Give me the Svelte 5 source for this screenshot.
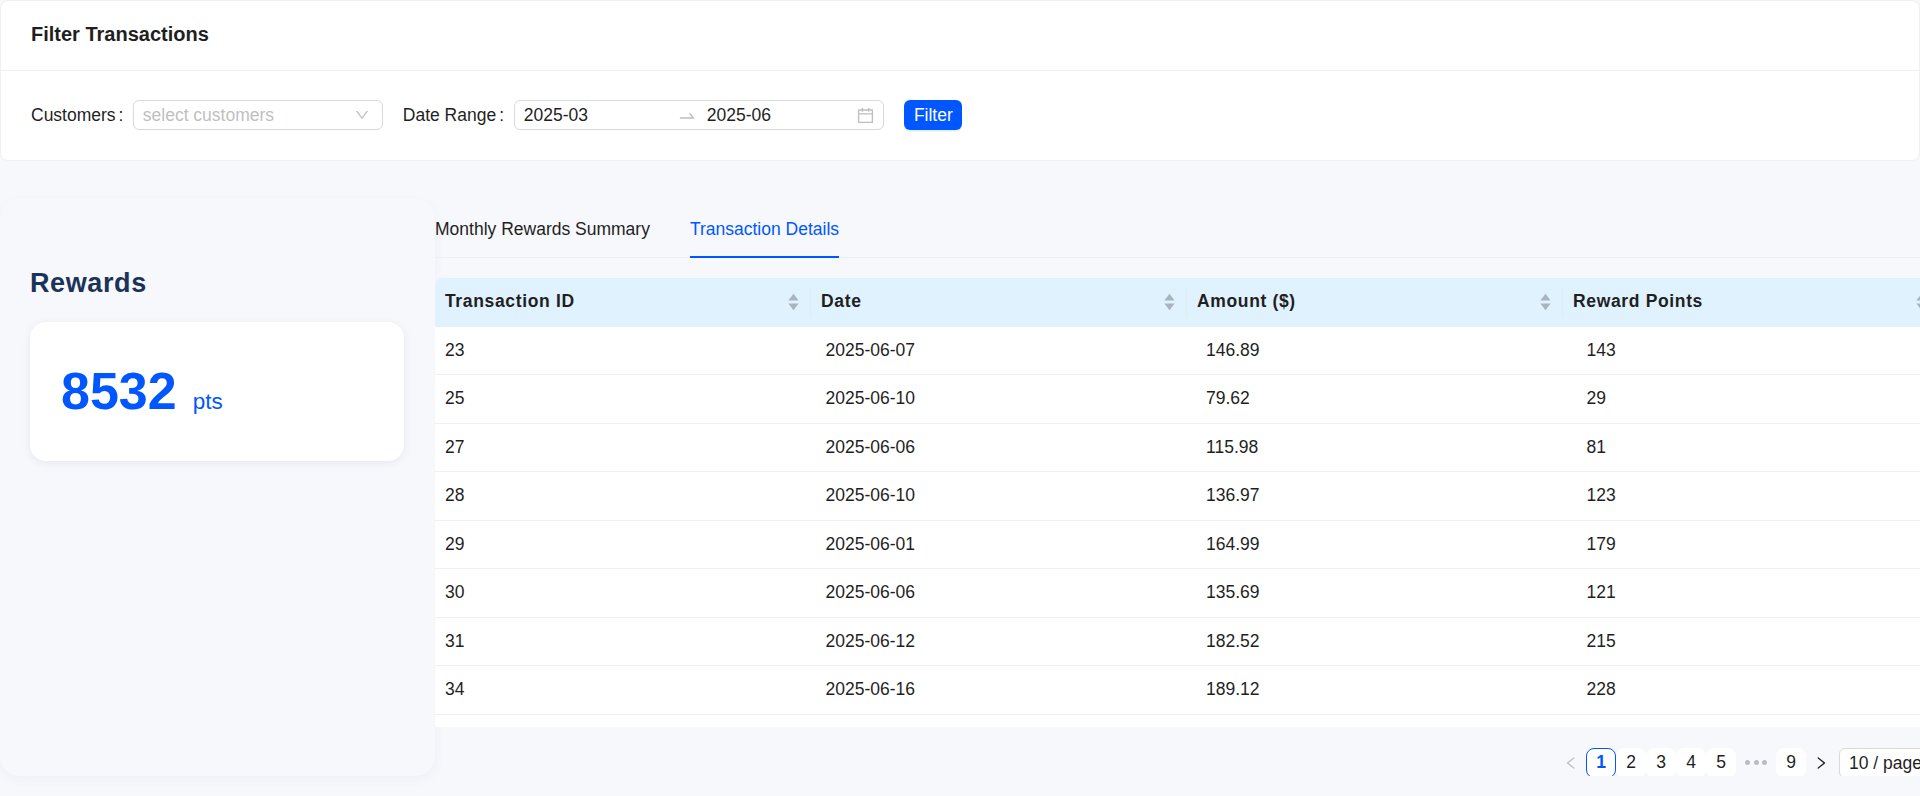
<script>
  const rows = [
    [23, "2025-06-07", "146.89", 143],
    [25, "2025-06-10", "79.62", 29],
    [27, "2025-06-06", "115.98", 81],
    [28, "2025-06-10", "136.97", 123],
    [29, "2025-06-01", "164.99", 179],
    [30, "2025-06-06", "135.69", 121],
    [31, "2025-06-12", "182.52", 215],
    [34, "2025-06-16", "189.12", 228],
  ];
  const columns = ["Transaction ID", "Date", "Amount ($)", "Reward Points"];
  const pages = [1, 2, 3, 4, 5];
</script>

<div class="page">
  <section class="filter-card">
    <h2 class="filter-title">Filter Transactions</h2>
    <div class="filter-row">
      <span class="field-label">Customers</span>
      <div class="select">
        <span class="placeholder">select customers</span>
        <svg class="chevron" viewBox="64 64 896 896" fill="currentColor"><path d="M884 256h-75c-5.1 0-9.9 2.5-12.9 6.6L512 654.2 227.9 262.6c-3-4.1-7.8-6.6-12.9-6.6h-75c-6.5 0-10.3 7.4-6.5 12.7l352.6 486.1c12.8 17.6 39 17.6 51.7 0l352.6-486.1c3.9-5.3.1-12.7-6.4-12.7z" /></svg>
      </div>
      <span class="field-label date-label">Date Range</span>
      <div class="range">
        <span class="range-value">2025-03</span>
        <svg class="swap" viewBox="0 0 1024 1024" fill="currentColor"><path d="M873.1 596.2l-164-208A32 32 0 0 0 684 376h-64.8c-6.7 0-10.4 7.7-6.3 13l144.3 183H152c-4.4 0-8 3.6-8 8v60c0 4.4 3.6 8 8 8h695.9c26.8 0 41.7-30.8 25.2-51.8z" /></svg>
        <span class="range-value second">2025-06</span>
        <svg class="calendar" viewBox="64 64 896 896" fill="currentColor"><path d="M880 184H712v-64c0-4.4-3.6-8-8-8h-56c-4.4 0-8 3.6-8 8v64H384v-64c0-4.4-3.6-8-8-8h-56c-4.4 0-8 3.6-8 8v64H144c-17.7 0-32 14.3-32 32v664c0 17.7 14.3 32 32 32h736c17.7 0 32-14.3 32-32V216c0-17.7-14.3-32-32-32zm-40 656H184V460h656v380zM184 392V256h128v48c0 4.4 3.6 8 8 8h56c4.4 0 8-3.6 8-8v-48h256v48c0 4.4 3.6 8 8 8h56c4.4 0 8-3.6 8-8v-48h128v136H184z" /></svg>
      </div>
      <button class="filter-btn">Filter</button>
    </div>
  </section>

  <div class="main">
    <aside class="sidebar">
      <h1 class="rewards-title">Rewards</h1>
      <div class="points-card">
        <span class="points">8532</span>
        <span class="unit">pts</span>
      </div>
    </aside>

    <div class="content">
      <div class="tabs">
        <span class="tab">Monthly Rewards Summary</span>
        <span class="tab active">Transaction Details</span>
      </div>

      <div class="table-head">
        {#each columns as col}
          <div class="th">
            <span class="th-label">{col}</span>
            <svg class="sorter" viewBox="0 0 11 18" fill="currentColor">
              <path d="M5.5 .8 10.6 7.6H.4z" />
              <path d="M5.5 17.2 .4 10.4h10.2z" />
            </svg>
          </div>
        {/each}
      </div>
      <div class="table-body">
        {#each rows as row}
          <div class="tr">
            {#each row as cell}
              <div class="td">{cell}</div>
            {/each}
          </div>
        {/each}
      </div>

      <div class="pagination">
        <span class="arrow disabled">
          <svg viewBox="64 64 896 896" fill="currentColor"><path d="M724 218.3V141c0-6.7-7.7-10.4-12.9-6.3L260.3 486.8a31.86 31.86 0 0 0 0 50.3l450.8 352.1c5.3 4.1 12.9.4 12.9-6.3v-77.3c0-4.9-2.3-9.6-6.1-12.6l-360-281 360-281.1c3.8-3 6.1-7.7 6.1-12.6z" /></svg>
        </span>
        {#each pages as p}
          <span class="page-item" class:current={p === 1}>{p}</span>
        {/each}
        <span class="dots"><i></i><i></i><i></i></span>
        <span class="page-item">9</span>
        <span class="arrow">
          <svg viewBox="64 64 896 896" fill="currentColor"><path d="M765.7 486.8L314.9 134.7A7.97 7.97 0 0 0 302 141v77.3c0 4.9 2.3 9.6 6.1 12.6l360 281.1-360 281.1c-3.9 3-6.1 7.7-6.1 12.6V883c0 6.7 7.7 10.4 12.9 6.3l450.8-352.1a31.96 31.96 0 0 0 0-50.4z" /></svg>
        </span>
        <div class="size-changer">10 / page</div>
      </div>
    </div>
  </div>
</div>

<style>
  :global(body) {
    background: #f7f8fc;
    overflow: hidden;
  }

  .page {
    width: 1920px;
    height: 796px;
    overflow: hidden;
    font-family: "Liberation Sans", Arial, sans-serif;
    font-size: 17.5px;
    color: #1f1f1f;
  }

  .filter-card {
    background: #fff;
    border: 1px solid #f0f0f0;
    border-radius: 8px;
    height: 161px;
    box-sizing: border-box;
  }
  .filter-title {
    margin: 0;
    height: 70px;
    box-sizing: border-box;
    padding: 21px 30px 0;
    font-size: 20px;
    line-height: 24px;
    font-weight: 700;
    border-bottom: 1px solid #f0f0f0;
  }
  .filter-row {
    display: flex;
    align-items: center;
    padding: 29px 30px 0;
  }
  .field-label {
    margin-right: 9.3px;
    white-space: nowrap;
  }
  .field-label::after {
    content: ":";
    margin-left: 3px;
  }
  .date-label {
    margin-left: 20px;
    margin-right: 10.3px;
  }
  .select,
  .range {
    height: 30px;
    box-sizing: border-box;
    border: 1px solid #d9d9d9;
    border-radius: 6px;
    background: #fff;
    display: flex;
    align-items: center;
  }
  .select {
    width: 250px;
    padding: 0 13px 0 9px;
    justify-content: space-between;
  }
  .placeholder {
    color: #bfbfbf;
  }
  .chevron {
    width: 14px;
    height: 14px;
    color: #bfbfbf;
  }
  .range {
    width: 370px;
    padding: 0 9px 0 8.5px;
  }
  .range-value {
    width: 153.5px;
  }
  .range-value.second {
    margin-left: 9.5px;
    flex: 1;
  }
  .swap {
    width: 20px;
    height: 20px;
    margin-top: 1px;
    color: #bfbfbf;
  }
  .calendar {
    width: 17px;
    height: 17px;
    color: #bfbfbf;
  }
  .filter-btn {
    margin-left: 20px;
    width: 58px;
    height: 30px;
    padding: 0;
    border: none;
    border-radius: 6px;
    background: #0057ff;
    color: #fff;
    font: inherit;
    box-shadow: 0 2px 0 rgba(5, 145, 255, 0.1);
  }

  .main {
    display: flex;
    margin-top: 37px;
    height: 578px;
  }
  .sidebar {
    width: 435px;
    flex: none;
    box-sizing: border-box;
    padding: 66.5px 31px 0 30px;
    border-radius: 20px;
    background: #f7f8fc;
    box-shadow: 0 4px 12px rgba(30, 50, 90, 0.04);
  }
  .rewards-title {
    margin: 0 0 21.5px;
    font-size: 27px;
    line-height: 36px;
    font-weight: 700;
    color: #1b3358;
    letter-spacing: 0.6px;
  }
  .points-card {
    height: 139px;
    box-sizing: border-box;
    padding: 39px 31px 0;
    display: flex;
    align-items: baseline;
    background: #fff;
    border-radius: 16px;
    box-shadow: 0 2px 8px rgba(30, 50, 90, 0.08);
    color: #0057ff;
  }
  .points {
    font-size: 52px;
    font-weight: 700;
  }
  .unit {
    font-size: 22.5px;
    margin-left: 16px;
  }

  .content {
    flex: 1;
    min-width: 0;
    overflow: hidden;
  }
  .tabs {
    display: flex;
    gap: 40px;
    height: 60px;
    box-sizing: border-box;
    border-bottom: 1px solid #eceef2;
  }
  .tab {
    padding-top: 19px;
    line-height: 24px;
  }
  .tab.active {
    color: #0057ff;
    border-bottom: 2px solid #0057ff;
    height: 60px;
    box-sizing: border-box;
  }

  .table-head {
    display: grid;
    grid-template-columns: repeat(4, 376px);
    margin-top: 20px;
    height: 48.5px;
    width: 1504px;
    background: #e0f2fe;
    border-radius: 8px 0 0 0;
    font-weight: 700;
    letter-spacing: 0.65px;
  }
  .th {
    position: relative;
    display: flex;
    align-items: center;
    justify-content: space-between;
    padding: 0 12px 0 10px;
  }
  .th-label {
    margin-bottom: 1px;
  }
  .th:not(:first-child)::before {
    content: "";
    position: absolute;
    left: -1px;
    top: 10px;
    bottom: 10px;
    width: 1px;
    background: #dcedf9;
  }
  .sorter {
    width: 11px;
    height: 18px;
    color: #a9b4bd;
  }
  .table-body {
    height: 400px;
    background: #fff;
    width: 1600px;
    overflow: hidden;
  }
  .tr {
    display: grid;
    grid-template-columns: repeat(4, 380.5px);
    height: 48.5px;
    box-sizing: border-box;
    border-bottom: 1px solid #f0f0f0;
    align-items: center;
  }
  .td {
    padding: 0 10px;
  }

  .pagination {
    display: flex;
    align-items: center;
    justify-content: flex-end;
    margin-top: 21px;
    height: 30px;
    width: 1524px;
  }
  .page-item {
    width: 30px;
    height: 30px;
    box-sizing: border-box;
    border-radius: 8px;
    background: #fff;
    display: flex;
    align-items: center;
    justify-content: center;
  }
  .page-item.current {
    border: 1px solid #0057ff;
    color: #0057ff;
    font-weight: 700;
  }
  .dots {
    width: 40px;
    display: flex;
    justify-content: center;
    gap: 3.5px;
  }
  .dots i {
    width: 5px;
    height: 5px;
    border-radius: 50%;
    background: #b8bcc4;
  }
  .arrow {
    width: 30px;
    height: 30px;
    display: flex;
    align-items: center;
    justify-content: center;
  }
  .arrow svg {
    width: 14px;
    height: 14px;
  }
  .arrow.disabled {
    color: #bfbfbf;
  }
  .size-changer {
    width: 120px;
    height: 30px;
    box-sizing: border-box;
    flex: none;
    border: 1px solid #d9d9d9;
    border-radius: 6px;
    background: #fff;
    padding: 0 9px;
    line-height: 28px;
    margin-left: 3px;
  }
</style>
